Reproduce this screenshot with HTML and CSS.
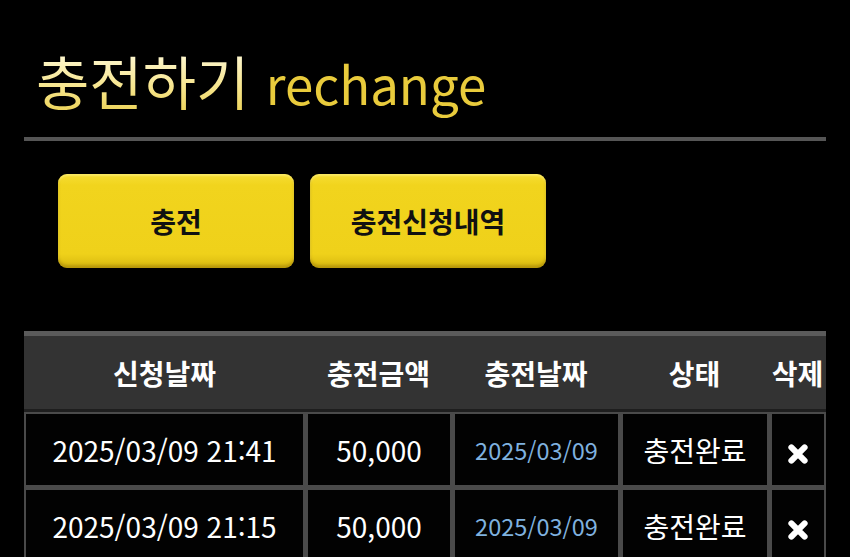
FILE: index.html
```html
<!DOCTYPE html>
<html lang="ko">
<head>
    <meta charset="UTF-8">
    <meta name="viewport" content="width=device-width, initial-scale=1.0">
    <title>충전하기</title>
    <link rel="stylesheet" href="styles.css">
</head>
<body>
    <div class="page">
        <h1 class="page-title"><span class="title-ko">충전하기</span> <span class="title-en">rechange</span></h1>

        <div class="tabs">
            <button class="tab">충전</button>
            <button class="tab">충전신청내역</button>
        </div>

        <!-- charge request history -->
        <table class="history">
            <colgroup>
                <col class="col-req">
                <col class="col-amount">
                <col class="col-date">
                <col class="col-state">
                <col class="col-del">
            </colgroup>
            <thead>
                <tr>
                    <th>신청날짜</th>
                    <th>충전금액</th>
                    <th>충전날짜</th>
                    <th>상태</th>
                    <th>삭제</th>
                </tr>
            </thead>
            <tbody>
                <tr>
                    <td>2025/03/09 21:41</td>
                    <td>50,000</td>
                    <td class="done-date">2025/03/09</td>
                    <td>충전완료</td>
                    <td>
                        <svg class="del-icon" viewBox="0 0 20 20"><path d="M4 4 L16 16 M16 4 L4 16"/></svg>
                    </td>
                </tr>
                <tr>
                    <td>2025/03/09 21:15</td>
                    <td>50,000</td>
                    <td class="done-date">2025/03/09</td>
                    <td>충전완료</td>
                    <td>
                        <svg class="del-icon" viewBox="0 0 20 20"><path d="M4 4 L16 16 M16 4 L4 16"/></svg>
                    </td>
                </tr>
            </tbody>
        </table>
    </div>
</body>
</html>
```

FILE: styles.css
```css
body {
    background-color: #000;
    font-family: "Noto Sans CJK KR", "Noto Sans", sans-serif;
    color: #fff;
    margin: 0;
    height: 557px;
    overflow: hidden;
}
.page {
    padding: 40px 24px 0 24px;
}
.page-title {
    margin: 0;
    padding: 0 0 14px 12px;
    font-size: 58px;
    font-weight: 400;
    line-height: 80px;
    border-bottom: 4px solid #555;
    white-space: nowrap;
}
.title-ko {
    background: linear-gradient(to bottom, #fffbe0 10%, #f6e48a 60%, #e8cc45 100%);
    -webkit-background-clip: text;
    background-clip: text;
    color: transparent;
}
.title-en {
    color: #e9cb3c;
    font-size: 51px;
}
.tabs {
    display: flex;
    gap: 16px;
    padding: 33px 0 0 34px;
}
.tab {
    width: 236px;
    height: 94px;
    border: none;
    border-radius: 9px;
    background: linear-gradient(to bottom, #f6dd33 0%, #f1d41d 12%, #efd11a 85%, #d7b80f 100%);
    box-shadow: inset 0 -3px 3px rgba(120, 90, 0, 0.35), inset 0 2px 2px rgba(255, 245, 150, 0.5);
    font-family: "Noto Sans CJK KR", sans-serif;
    font-size: 28px;
    font-weight: 700;
    color: #111;
    cursor: pointer;
}
.history {
    margin-top: 63px;
    width: 802px;
    table-layout: fixed;
    border-collapse: separate;
    border-spacing: 0;
    font-size: 28px;
}
.col-req { width: 281px; }
.col-amount { width: 147px; }
.col-date { width: 168px; }
.col-state { width: 149px; }
.col-del { width: 57px; }
.history th {
    background-color: #333;
    border-top: 5px solid #5b5b5b;
    border-bottom: 3px solid #1e1e1e;
    height: 73px;
    padding: 0;
    font-weight: 700;
    white-space: nowrap;
}
.history td {
    border: 2px solid #4a4a4a;
    height: 70px;
    padding: 1px 0 0 0;
    text-align: center;
    white-space: nowrap;
    background-color: #020202;
}
.history td + td {
    border-left-width: 3px;
}
.history tbody tr + tr td {
    border-top-width: 3px;
}
.done-date {
    color: #7fb1df;
    font-size: 23.5px;
}
.del-icon {
    width: 22px;
    height: 22px;
    vertical-align: middle;
    stroke: #fff;
    stroke-width: 5.5;
    stroke-linecap: round;
    fill: none;
}
```
